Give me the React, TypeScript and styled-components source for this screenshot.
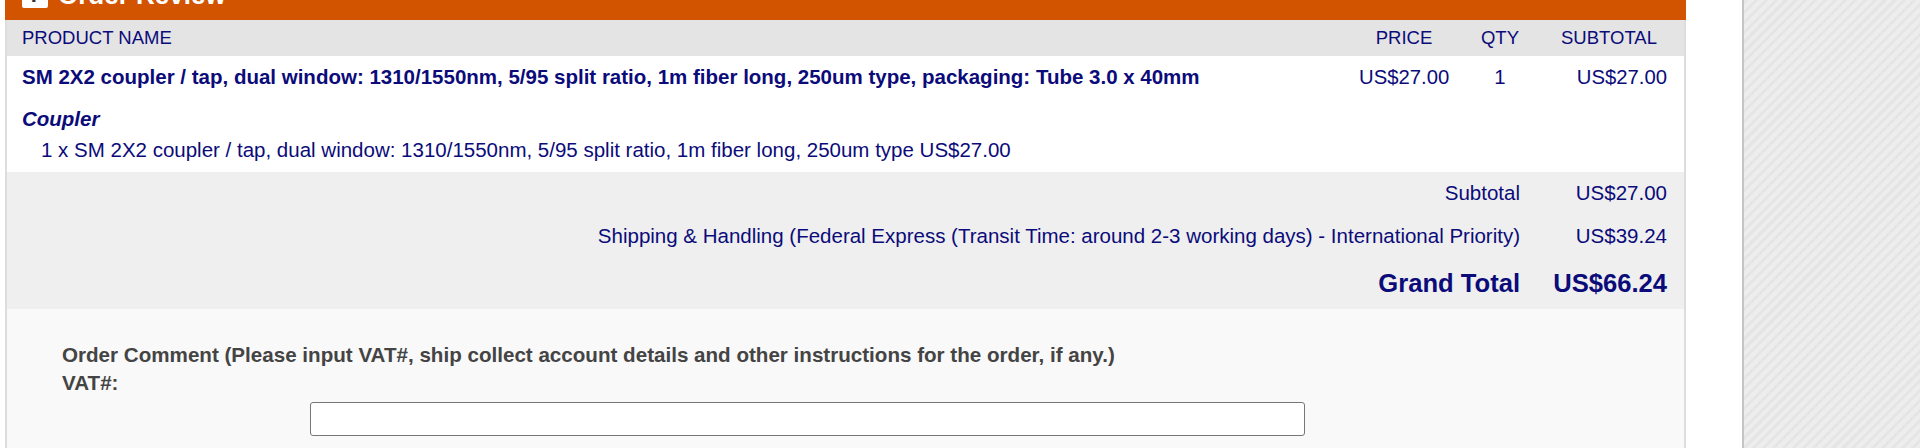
import React from "react";
import styled, { createGlobalStyle } from "styled-components";

const GlobalStyle = createGlobalStyle`
  html, body { margin: 0; padding: 0; background: #ffffff; }
  body { font-family: "Liberation Sans", Arial, Helvetica, sans-serif; overflow: hidden; }
  * { box-sizing: border-box; }
`;

const NAVY = "#0b0b7a";

const Page = styled.div`
  display: flex;
  height: 448px;
  overflow: hidden;
`;

const MainCol = styled.div`
  width: 1742px;
  flex: none;
  padding-left: 5px;
`;

const Panel = styled.section`
  width: 1681px;
  margin-top: -30px;
`;

const TitleBar = styled.div`
  height: 50px;
  background: #d35400;
  display: flex;
  align-items: center;
  gap: 10px;
  padding-left: 17px;
  color: #ffffff;
  font-weight: bold;
  font-size: 26px;
`;

const StepBadge = styled.span`
  width: 26px;
  height: 26px;
  background: #ffffff;
  border-radius: 2px;
  color: #333333;
  font-size: 22px;
  font-weight: bold;
  display: flex;
  align-items: center;
  justify-content: center;
`;

const Body = styled.div`
  border-left: 2px solid #dddddd;
  border-right: 2px solid #dddddd;
  color: ${NAVY};
`;

const ItemGrid = styled.div`
  display: grid;
  grid-template-columns: 1fr 90px 102px 116px;
  align-items: center;
  padding: 0 17px 0 15px;
`;

const HeaderRow = styled(ItemGrid)`
  background: #e4e4e4;
  height: 36px;
  font-size: 18.5px;
`;

const Cell = styled.div<{ $align?: "left" | "center" | "right" }>`
  text-align: ${(p) => p.$align || "left"};
  white-space: nowrap;
`;

const ItemBlock = styled.div`
  background: #ffffff;
  padding-bottom: 8px;
`;

const ProductRow = styled(ItemGrid)`
  height: 42px;
  font-size: 20.3px;
`;

const ProductName = styled.div`
  font-weight: bold;
  font-size: 20.5px;
  white-space: nowrap;
`;

const OptionGroup = styled.div`
  padding-left: 15px;
`;

const OptionTitle = styled.div`
  font-weight: bold;
  font-style: italic;
  font-size: 20.5px;
  line-height: 28px;
  margin-top: 7px;
`;

const OptionLine = styled.div`
  font-size: 20.5px;
  line-height: 28px;
  margin-top: 3px;
  padding-left: 19px;
`;

const TotalsBlock = styled.div`
  background: #efefef;
`;

const TotalRow = styled.div<{ $h: number; $big?: boolean }>`
  display: grid;
  grid-template-columns: 1fr 147px;
  align-items: center;
  height: ${(p) => p.$h}px;
  padding: 0 17px 0 15px;
  text-align: right;
  font-size: ${(p) => (p.$big ? "25.6px" : "20.5px")};
  font-weight: ${(p) => (p.$big ? "bold" : "normal")};
  white-space: nowrap;
`;

const CommentBlock = styled.div`
  background: #f9f9f9;
  padding: 32px 0 40px 55px;
  color: #444444;
  font-weight: bold;
  font-size: 20.6px;
  line-height: 28px;
`;

const FieldLabel = styled.div``;

const TextInput = styled.input`
  display: block;
  margin: 5px 0 8px 248px;
  width: 995px;
  height: 34px;
  border: 1.5px solid #767676;
  border-radius: 3px;
  background: #ffffff;
`;

const Sidebar = styled.aside`
  flex: 1;
  border-left: 2px solid #c4c4c4;
  background: repeating-linear-gradient(
    -45deg,
    #ededed 0px,
    #ededed 4px,
    #e5e5e5 4px,
    #e5e5e5 7px
  );
`;

export default function App() {
  return (
    <>
      <GlobalStyle />
      <Page>
        <MainCol>
          <Panel>
            <TitleBar>
              <StepBadge>7</StepBadge>
              <span>Order Review</span>
            </TitleBar>
            <Body>
              <HeaderRow>
                <Cell>PRODUCT NAME</Cell>
                <Cell $align="center">PRICE</Cell>
                <Cell $align="center">QTY</Cell>
                <Cell $align="center">SUBTOTAL</Cell>
              </HeaderRow>
              <ItemBlock>
                <ProductRow>
                  <ProductName>
                    SM 2X2 coupler / tap, dual window: 1310/1550nm, 5/95 split ratio, 1m fiber long, 250um type, packaging: Tube 3.0 x 40mm
                  </ProductName>
                  <Cell $align="center">US$27.00</Cell>
                  <Cell $align="center">1</Cell>
                  <Cell $align="right">US$27.00</Cell>
                </ProductRow>
                <OptionGroup>
                  <OptionTitle>Coupler</OptionTitle>
                  <OptionLine>
                    1 x SM 2X2 coupler / tap, dual window: 1310/1550nm, 5/95 split ratio, 1m fiber long, 250um type US$27.00
                  </OptionLine>
                </OptionGroup>
              </ItemBlock>
              <TotalsBlock>
                <TotalRow $h={42}>
                  <span>Subtotal</span>
                  <span>US$27.00</span>
                </TotalRow>
                <TotalRow $h={44}>
                  <span>
                    Shipping &amp; Handling (Federal Express (Transit Time: around 2-3 working days) - International Priority)
                  </span>
                  <span>US$39.24</span>
                </TotalRow>
                <TotalRow $h={51} $big>
                  <span>Grand Total</span>
                  <span>US$66.24</span>
                </TotalRow>
              </TotalsBlock>
              <CommentBlock>
                <FieldLabel>
                  Order Comment (Please input VAT#, ship collect account details and other instructions for the order, if any.)
                </FieldLabel>
                <FieldLabel>VAT#:</FieldLabel>
                <TextInput type="text" />
                <FieldLabel>Carrier Name:</FieldLabel>
              </CommentBlock>
            </Body>
          </Panel>
        </MainCol>
        <Sidebar />
      </Page>
    </>
  );
}
